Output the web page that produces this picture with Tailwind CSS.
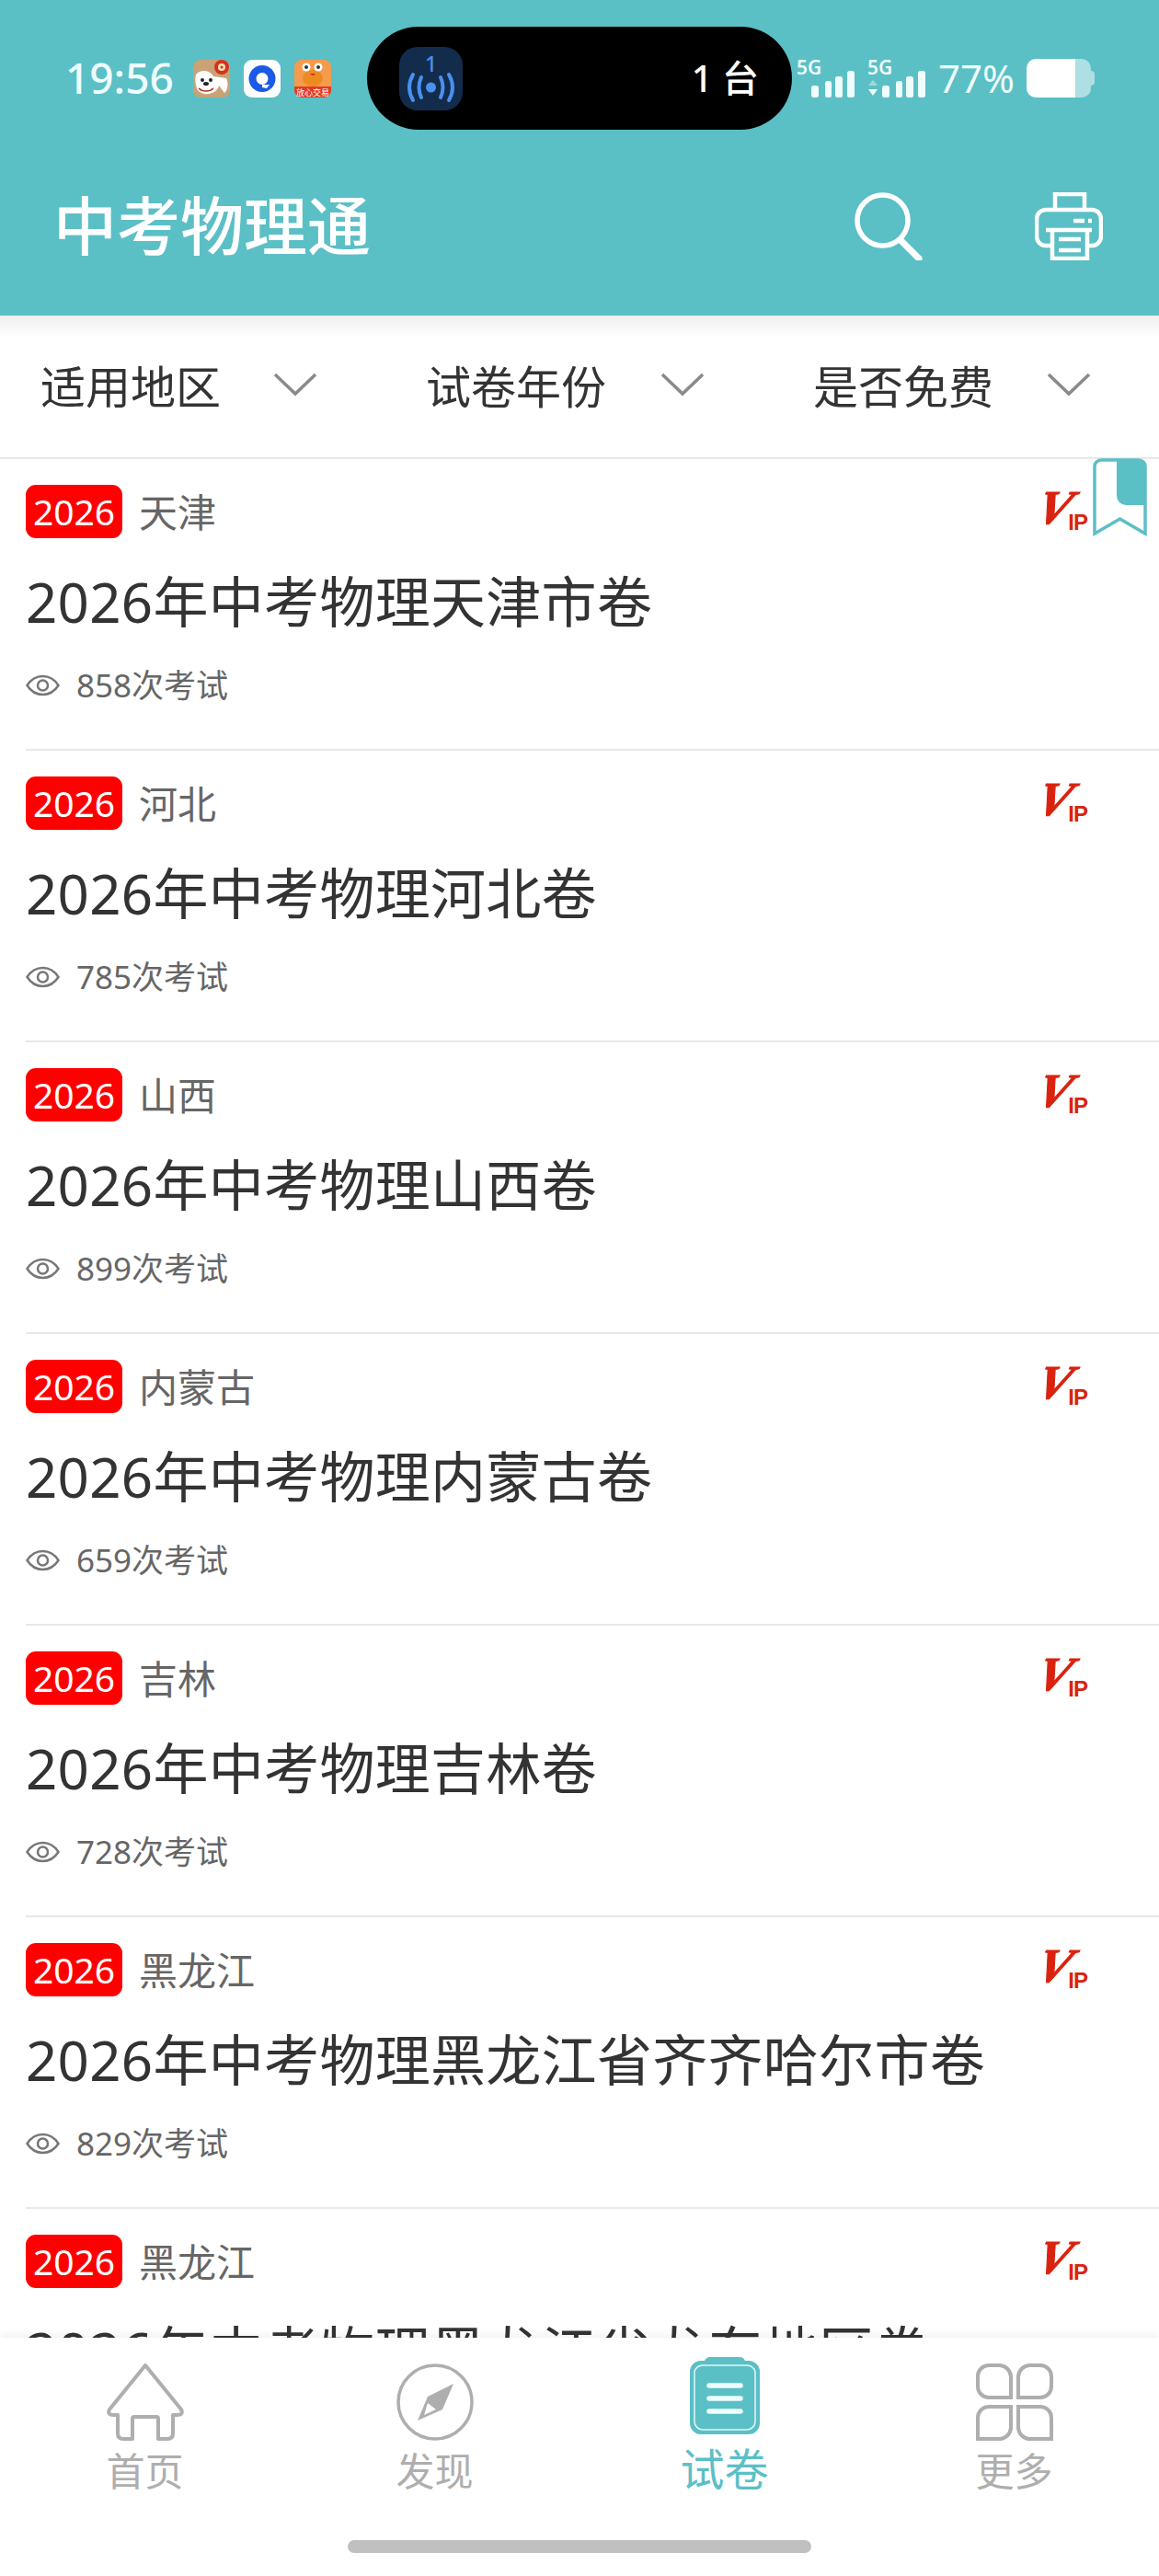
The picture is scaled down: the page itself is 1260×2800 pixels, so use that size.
<!DOCTYPE html>
<html lang="zh">
<head>
  <meta charset="utf-8">
  <title>中考物理通</title>
  <script src="https://cdn.jsdelivr.net/npm/@tailwindcss/browser@4"></script>
</head>
<body class="w-[1260px] h-[2800px] bg-white overflow-hidden font-['Noto_Sans','Noto_Sans_CJK_SC',sans-serif]">
  <svg class="hidden">
    <symbol id="eye" viewBox="0 0 37 24">
      <path d="M1.5 12C6 5 12 2 18.500 2S31 5 35.500 12C31 19 25 22 18.500 22S6 19 1.500 12Z" fill="none" stroke="#777" stroke-width="2.500"/>
      <circle cx="18.500" cy="12" r="5.500" fill="none" stroke="#777" stroke-width="2.500"/>
    </symbol>
    <symbol id="chevron" viewBox="0 0 48 26">
      <path d="M2 2L24 23L46 2" fill="none" stroke="#8a8a8a" stroke-width="3.500"/>
    </symbol>
  </svg>

  <div class="flex flex-col h-full relative">
    <!-- Header -->
    <header class="h-[343px] shrink-0 bg-[#5bbfc6] text-white">
      <!-- Status bar -->
      <div class="h-[170px] flex items-center pl-[71px]">
        <span class="w-[119px] mb-[2px] text-[46px] leading-none font-medium text-[#eefdfd]">19:56</span>
        <div class="flex gap-[15px] ml-[20px]">
          <svg class="w-[40px] h-[41px]" viewBox="0 0 40 41">
            <rect width="40" height="41" rx="8" fill="#c9a276"/>
            <path d="M3 16C8 10 18 11 22 18L36 20C39 26 37 34 34 36L28 28C26 38 10 40 5 33C2 28 2 20 3 16Z" fill="#fff"/>
            <circle cx="10" cy="22" r="2" fill="#222"/><circle cx="19" cy="22" r="2" fill="#222"/>
            <ellipse cx="14" cy="26" rx="3" ry="2" fill="#222"/>
            <path d="M6 31C10 35 18 35 22 31" fill="none" stroke="#b32a1a" stroke-width="1.500"/>
            <circle cx="31" cy="8" r="8" fill="#d4321f"/><circle cx="31" cy="8" r="4" fill="#f7e3b5"/><circle cx="31" cy="8" r="1.500" fill="#d4321f"/>
          </svg>
          <svg class="w-[40px] h-[41px]" viewBox="0 0 40 41">
            <rect width="40" height="41" rx="9" fill="#fff"/>
            <circle cx="20" cy="20.500" r="14.500" fill="#1a5ae6"/>
            <circle cx="20" cy="20.500" r="6.500" fill="#fff"/>
            <path d="M20 27L28 27L25 31L20 30Z" fill="#fff"/>
          </svg>
          <svg class="w-[40px] h-[41px]" viewBox="0 0 40 41">
            <rect width="40" height="41" rx="8" fill="#f49b4e"/>
            <ellipse cx="20" cy="20" rx="11" ry="9" fill="#ee8a22"/>
            <circle cx="13" cy="8" r="4.500" fill="#fff"/><circle cx="26" cy="8" r="4.500" fill="#fff"/>
            <circle cx="13" cy="8" r="2" fill="#333"/><circle cx="26" cy="8" r="2" fill="#333"/>
            <path d="M17 15Q20 19 23 15Z" fill="#c7301f"/>
            <path d="M0 29H40V33A8 8 0 0 1 32 41H8A8 8 0 0 1 0 33Z" fill="#df3c26"/>
            <text x="20" y="38.500" text-anchor="middle" font-size="9" fill="#fff">放心交易</text>
          </svg>
        </div>

        <!-- Island -->
        <div class="ml-[39px] w-[462px] h-[112px] rounded-full bg-black flex items-center pl-[35px] pr-[36px]">
          <svg class="w-[69px] h-[69px]" viewBox="0 0 69 69">
            <rect width="69" height="69" rx="20" fill="#132c4c"/>
            <text x="34.500" y="27" text-anchor="middle" font-size="23" font-weight="500" fill="#4a90f0">1</text>
            <circle cx="34.500" cy="44" r="5.500" fill="#4a90f0"/>
            <path d="M24 33Q19 44 24 55M45 33Q50 44 45 55M15 30Q7 44 15 58M54 30Q62 44 54 58" fill="none" stroke="#4a90f0" stroke-width="4" stroke-linecap="round"/>
          </svg>
          <span class="ml-auto text-[40px] leading-none font-medium text-white">1 台</span>
        </div>

        <!-- Signal -->
        <svg class="ml-[5px] w-[140px] h-[42px] overflow-visible" viewBox="0 0 140 42">
          <text x="0" y="17" font-size="21" font-weight="600" fill="#eefdfd">5G</text>
          <rect x="16" y="29" width="8" height="13" rx="2.500" fill="#eefdfd"/>
          <rect x="31" y="24" width="7" height="18" rx="2.500" fill="#eefdfd"/>
          <rect x="42" y="19" width="8" height="23" rx="2.500" fill="#eefdfd"/>
          <rect x="55" y="13" width="8" height="29" rx="2.500" fill="#eefdfd"/>
          <text x="77" y="17" font-size="21" font-weight="600" fill="#eefdfd">5G</text>
          <path d="M78 29L83 23L88 29Z" fill="#9fd9d9"/>
          <path d="M78 33H88L83 40Z" fill="#eefdfd"/>
          <rect x="93" y="29" width="8" height="13" rx="2.500" fill="#eefdfd"/>
          <rect x="108" y="24" width="7" height="18" rx="2.500" fill="#eefdfd"/>
          <rect x="119" y="19" width="8" height="23" rx="2.500" fill="#eefdfd"/>
          <rect x="132" y="13" width="8" height="29" rx="2.500" fill="#eefdfd"/>
        </svg>
        <span class="ml-[14px] w-[83px] text-[42px] leading-none whitespace-nowrap text-[#eefdfd]">77%</span>

        <!-- Battery -->
        <div class="ml-[13px] flex items-center">
          <div class="w-[53px] h-[42px] bg-white rounded-l-[10px]"></div>
          <div class="w-[17px] h-[42px] bg-white/50 rounded-r-[10px]"></div>
          <div class="w-[4px] h-[16px] bg-white/50 rounded-r-[4px]"></div>
        </div>
      </div>

      <!-- Title bar -->
      <div class="h-[173px] pb-[22px] flex items-center pl-[58px] pr-[61px]">
        <h1 class="text-[69px] leading-none font-medium text-white">中考物理通</h1>
        <svg class="ml-auto w-[74px] h-[74px]" viewBox="0 0 74 74" fill="none" stroke="#fff">
          <circle cx="30.500" cy="30.500" r="27.500" stroke-width="5.500"/>
          <path d="M50 52L70 72" stroke-width="7" stroke-linecap="round"/>
        </svg>
        <svg class="ml-[122px] w-[74px] h-[74px]" viewBox="0 0 74 74" fill="none" stroke="#fff" stroke-width="4.500">
          <path d="M22 19V2H54V19"/>
          <path d="M17 58H12A10 10 0 0 1 2 48V29A10 10 0 0 1 12 19H62A10 10 0 0 1 72 29V48A10 10 0 0 1 62 58H57"/>
          <path d="M12 41H62"/>
          <path d="M19 41V72H57V41"/>
          <path d="M26 51H50M26 63H50"/>
          <path d="M42 31H54M58 31H62"/>
        </svg>
      </div>
    </header>

    <!-- Filters -->
    <div class="h-[156px] shrink-0 grid grid-cols-3 border-b-2 border-[#e8e8e8] bg-gradient-to-b from-[#efefef] to-white to-[16%]">
      <div class="flex items-center pl-[44px] gap-[57px]">
        <span class="text-[49px] leading-none text-[#333]">适用地区</span>
        <svg class="w-[48px] h-[26px] mb-[4px]"><use href="#chevron"/></svg>
      </div>
      <div class="flex items-center pl-[43px] gap-[59px]">
        <span class="text-[49px] leading-none text-[#333]">试卷年份</span>
        <svg class="w-[48px] h-[26px] mb-[4px]"><use href="#chevron"/></svg>
      </div>
      <div class="flex items-center pl-[44px] gap-[58px]">
        <span class="text-[49px] leading-none text-[#333]">是否免费</span>
        <svg class="w-[48px] h-[26px] mb-[4px]"><use href="#chevron"/></svg>
      </div>
    </div>

    <!-- List -->
    <div class="flex-1 min-h-0 overflow-hidden">
      <div class="h-[317px] ml-[28px] pt-[28px] border-b-2 border-[#e8e8e8]">
        <div class="flex items-center h-[58px] pr-[78px]">
          <span class="w-[105px] h-[58px] rounded-[11px] bg-[#fe0000] text-white text-[39px] leading-[57px] text-center">2026</span>
          <span class="ml-[18px] pt-[2px] text-[42px] leading-none text-[#666]">天津</span>
          <div class="ml-auto relative w-[46px] h-[44px]">
            <span class="absolute left-[-14px] top-[-8px] origin-bottom -skew-x-[16deg] scale-x-105 [-webkit-text-stroke:1px_#d9230f] font-['Liberation_Serif',serif] italic font-bold text-[52px] leading-none text-[#d9230f]">V</span>
            <span class="absolute right-0 bottom-[-2px] font-['Liberation_Sans',sans-serif] font-bold text-[24px] leading-none tracking-[-1px] text-[#d9230f]">IP</span>
          </div>
        </div>
        <div class="mt-[33px] text-[60px] leading-[72px] tracking-[0.3px] text-[#333]">2026年中考物理天津市卷</div>
        <div class="mt-[31px] flex items-center h-[48px] gap-[18px] text-[35px] text-[#666]">
          <svg class="w-[37px] h-[24px]"><use href="#eye"/></svg>
          <span>858次考试</span>
        </div>
      </div>

      <div class="h-[317px] ml-[28px] pt-[28px] border-b-2 border-[#e8e8e8]">
        <div class="flex items-center h-[58px] pr-[78px]">
          <span class="w-[105px] h-[58px] rounded-[11px] bg-[#fe0000] text-white text-[39px] leading-[57px] text-center">2026</span>
          <span class="ml-[18px] pt-[2px] text-[42px] leading-none text-[#666]">河北</span>
          <div class="ml-auto relative w-[46px] h-[44px]">
            <span class="absolute left-[-14px] top-[-8px] origin-bottom -skew-x-[16deg] scale-x-105 [-webkit-text-stroke:1px_#d9230f] font-['Liberation_Serif',serif] italic font-bold text-[52px] leading-none text-[#d9230f]">V</span>
            <span class="absolute right-0 bottom-[-2px] font-['Liberation_Sans',sans-serif] font-bold text-[24px] leading-none tracking-[-1px] text-[#d9230f]">IP</span>
          </div>
        </div>
        <div class="mt-[33px] text-[60px] leading-[72px] tracking-[0.3px] text-[#333]">2026年中考物理河北卷</div>
        <div class="mt-[31px] flex items-center h-[48px] gap-[18px] text-[35px] text-[#666]">
          <svg class="w-[37px] h-[24px]"><use href="#eye"/></svg>
          <span>785次考试</span>
        </div>
      </div>

      <div class="h-[317px] ml-[28px] pt-[28px] border-b-2 border-[#e8e8e8]">
        <div class="flex items-center h-[58px] pr-[78px]">
          <span class="w-[105px] h-[58px] rounded-[11px] bg-[#fe0000] text-white text-[39px] leading-[57px] text-center">2026</span>
          <span class="ml-[18px] pt-[2px] text-[42px] leading-none text-[#666]">山西</span>
          <div class="ml-auto relative w-[46px] h-[44px]">
            <span class="absolute left-[-14px] top-[-8px] origin-bottom -skew-x-[16deg] scale-x-105 [-webkit-text-stroke:1px_#d9230f] font-['Liberation_Serif',serif] italic font-bold text-[52px] leading-none text-[#d9230f]">V</span>
            <span class="absolute right-0 bottom-[-2px] font-['Liberation_Sans',sans-serif] font-bold text-[24px] leading-none tracking-[-1px] text-[#d9230f]">IP</span>
          </div>
        </div>
        <div class="mt-[33px] text-[60px] leading-[72px] tracking-[0.3px] text-[#333]">2026年中考物理山西卷</div>
        <div class="mt-[31px] flex items-center h-[48px] gap-[18px] text-[35px] text-[#666]">
          <svg class="w-[37px] h-[24px]"><use href="#eye"/></svg>
          <span>899次考试</span>
        </div>
      </div>

      <div class="h-[317px] ml-[28px] pt-[28px] border-b-2 border-[#e8e8e8]">
        <div class="flex items-center h-[58px] pr-[78px]">
          <span class="w-[105px] h-[58px] rounded-[11px] bg-[#fe0000] text-white text-[39px] leading-[57px] text-center">2026</span>
          <span class="ml-[18px] pt-[2px] text-[42px] leading-none text-[#666]">内蒙古</span>
          <div class="ml-auto relative w-[46px] h-[44px]">
            <span class="absolute left-[-14px] top-[-8px] origin-bottom -skew-x-[16deg] scale-x-105 [-webkit-text-stroke:1px_#d9230f] font-['Liberation_Serif',serif] italic font-bold text-[52px] leading-none text-[#d9230f]">V</span>
            <span class="absolute right-0 bottom-[-2px] font-['Liberation_Sans',sans-serif] font-bold text-[24px] leading-none tracking-[-1px] text-[#d9230f]">IP</span>
          </div>
        </div>
        <div class="mt-[33px] text-[60px] leading-[72px] tracking-[0.3px] text-[#333]">2026年中考物理内蒙古卷</div>
        <div class="mt-[31px] flex items-center h-[48px] gap-[18px] text-[35px] text-[#666]">
          <svg class="w-[37px] h-[24px]"><use href="#eye"/></svg>
          <span>659次考试</span>
        </div>
      </div>

      <div class="h-[317px] ml-[28px] pt-[28px] border-b-2 border-[#e8e8e8]">
        <div class="flex items-center h-[58px] pr-[78px]">
          <span class="w-[105px] h-[58px] rounded-[11px] bg-[#fe0000] text-white text-[39px] leading-[57px] text-center">2026</span>
          <span class="ml-[18px] pt-[2px] text-[42px] leading-none text-[#666]">吉林</span>
          <div class="ml-auto relative w-[46px] h-[44px]">
            <span class="absolute left-[-14px] top-[-8px] origin-bottom -skew-x-[16deg] scale-x-105 [-webkit-text-stroke:1px_#d9230f] font-['Liberation_Serif',serif] italic font-bold text-[52px] leading-none text-[#d9230f]">V</span>
            <span class="absolute right-0 bottom-[-2px] font-['Liberation_Sans',sans-serif] font-bold text-[24px] leading-none tracking-[-1px] text-[#d9230f]">IP</span>
          </div>
        </div>
        <div class="mt-[33px] text-[60px] leading-[72px] tracking-[0.3px] text-[#333]">2026年中考物理吉林卷</div>
        <div class="mt-[31px] flex items-center h-[48px] gap-[18px] text-[35px] text-[#666]">
          <svg class="w-[37px] h-[24px]"><use href="#eye"/></svg>
          <span>728次考试</span>
        </div>
      </div>

      <div class="h-[317px] ml-[28px] pt-[28px] border-b-2 border-[#e8e8e8]">
        <div class="flex items-center h-[58px] pr-[78px]">
          <span class="w-[105px] h-[58px] rounded-[11px] bg-[#fe0000] text-white text-[39px] leading-[57px] text-center">2026</span>
          <span class="ml-[18px] pt-[2px] text-[42px] leading-none text-[#666]">黑龙江</span>
          <div class="ml-auto relative w-[46px] h-[44px]">
            <span class="absolute left-[-14px] top-[-8px] origin-bottom -skew-x-[16deg] scale-x-105 [-webkit-text-stroke:1px_#d9230f] font-['Liberation_Serif',serif] italic font-bold text-[52px] leading-none text-[#d9230f]">V</span>
            <span class="absolute right-0 bottom-[-2px] font-['Liberation_Sans',sans-serif] font-bold text-[24px] leading-none tracking-[-1px] text-[#d9230f]">IP</span>
          </div>
        </div>
        <div class="mt-[33px] text-[60px] leading-[72px] tracking-[0.3px] text-[#333]">2026年中考物理黑龙江省齐齐哈尔市卷</div>
        <div class="mt-[31px] flex items-center h-[48px] gap-[18px] text-[35px] text-[#666]">
          <svg class="w-[37px] h-[24px]"><use href="#eye"/></svg>
          <span>829次考试</span>
        </div>
      </div>

      <div class="h-[317px] ml-[28px] pt-[28px]">
        <div class="flex items-center h-[58px] pr-[78px]">
          <span class="w-[105px] h-[58px] rounded-[11px] bg-[#fe0000] text-white text-[39px] leading-[57px] text-center">2026</span>
          <span class="ml-[18px] pt-[2px] text-[42px] leading-none text-[#666]">黑龙江</span>
          <div class="ml-auto relative w-[46px] h-[44px]">
            <span class="absolute left-[-14px] top-[-8px] origin-bottom -skew-x-[16deg] scale-x-105 [-webkit-text-stroke:1px_#d9230f] font-['Liberation_Serif',serif] italic font-bold text-[52px] leading-none text-[#d9230f]">V</span>
            <span class="absolute right-0 bottom-[-2px] font-['Liberation_Sans',sans-serif] font-bold text-[24px] leading-none tracking-[-1px] text-[#d9230f]">IP</span>
          </div>
        </div>
        <div class="mt-[33px] text-[60px] leading-[72px] tracking-[0.3px] text-[#333]">2026年中考物理黑龙江省龙东地区卷</div>
      </div>
    </div>

    <!-- Bookmark -->
    <svg class="absolute left-[1188px] top-[498px] w-[59px] h-[85px]" viewBox="0 0 59 85">
      <path d="M9 2H50A7 7 0 0 1 57 9V82L29.500 66L2 82V9A7 7 0 0 1 9 2Z" fill="#fff" stroke="#5bbfc6" stroke-width="3.500"/>
      <path d="M26 2H50A7 7 0 0 1 57 9V51H36A10 10 0 0 1 26 41Z" fill="#5bbfc6"/>
    </svg>

    <!-- Bottom nav -->
    <nav class="h-[259px] shrink-0 bg-white grid grid-cols-4 shadow-[0_-4px_8px_rgba(0,0,0,0.05)] relative">
      <div class="flex flex-col items-center pt-[28px]">
        <svg class="w-[84px] h-[84px]" viewBox="0 0 84 84" fill="none" stroke="#aeaeae" stroke-width="4" stroke-linejoin="round">
          <path d="M42 2L81 50Q84 56 76 56H72V76Q72 82 66 82H56V60Q56 58 54 58H30Q28 58 28 60V82H18Q12 82 12 76V56H8Q0 56 3 50Z"/>
        </svg>
        <span class="mt-[9px] text-[42px] leading-[48px] text-[#aeaeae]">首页</span>
      </div>
      <div class="flex flex-col items-center pt-[28px]">
        <svg class="w-[84px] h-[84px]" viewBox="0 0 84 84" fill="none">
          <circle cx="42" cy="42" r="40" stroke="#aeaeae" stroke-width="3.500"/>
          <path d="M62 22L50 50L23 62L34 36Z" fill="#aeaeae"/>
          <path d="M34 43L43 50L30 56Z" fill="#fff"/>
        </svg>
        <span class="mt-[9px] text-[42px] leading-[48px] text-[#aeaeae]">发现</span>
      </div>
      <div class="flex flex-col items-center pt-[21px]">
        <svg class="w-[76px] h-[84px]" viewBox="0 0 76 84">
          <path d="M16 4Q18 0 22 0H54Q58 0 60 4H64A12 12 0 0 1 76 16V72A12 12 0 0 1 64 84H12A12 12 0 0 1 0 72V16A12 12 0 0 1 12 4Z" fill="#5bbfc6"/>
          <path d="M14 9H62A9 9 0 0 1 71 16V70A9 9 0 0 1 62 79H14A9 9 0 0 1 5 70V16A9 9 0 0 1 14 9Z" fill="none" stroke="#e4f8f8" stroke-width="1.500"/>
          <path d="M21 31H55M21 45H55M21 59H55" stroke="#eefdfd" stroke-width="5.500" stroke-linecap="round"/>
        </svg>
        <span class="mt-[14px] text-[48px] leading-[48px] text-[#5bbfc6]">试卷</span>
      </div>
      <div class="flex flex-col items-center pt-[28px]">
        <svg class="w-[84px] h-[84px]" viewBox="0 0 84 84" fill="none" stroke="#aeaeae" stroke-width="4">
          <path d="M14 2H26A13 13 0 0 1 38 14V37H14A12 12 0 0 1 2 25V14A12 12 0 0 1 14 2Z"/>
          <path d="M58 2H70A12 12 0 0 1 82 14V25A12 12 0 0 1 70 37H46V14A13 13 0 0 1 58 2Z"/>
          <path d="M14 47H38V70A13 13 0 0 1 26 82H2V59A12 12 0 0 1 14 47Z"/>
          <path d="M46 47H70A12 12 0 0 1 82 59V82H58A13 13 0 0 1 46 70Z"/>
        </svg>
        <span class="mt-[9px] text-[42px] leading-[48px] text-[#aeaeae]">更多</span>
      </div>
      <div class="absolute left-[378px] bottom-[25px] w-[504px] h-[14px] rounded-full bg-[#c0c0c0]"></div>
    </nav>
  </div>
</body>
</html>
